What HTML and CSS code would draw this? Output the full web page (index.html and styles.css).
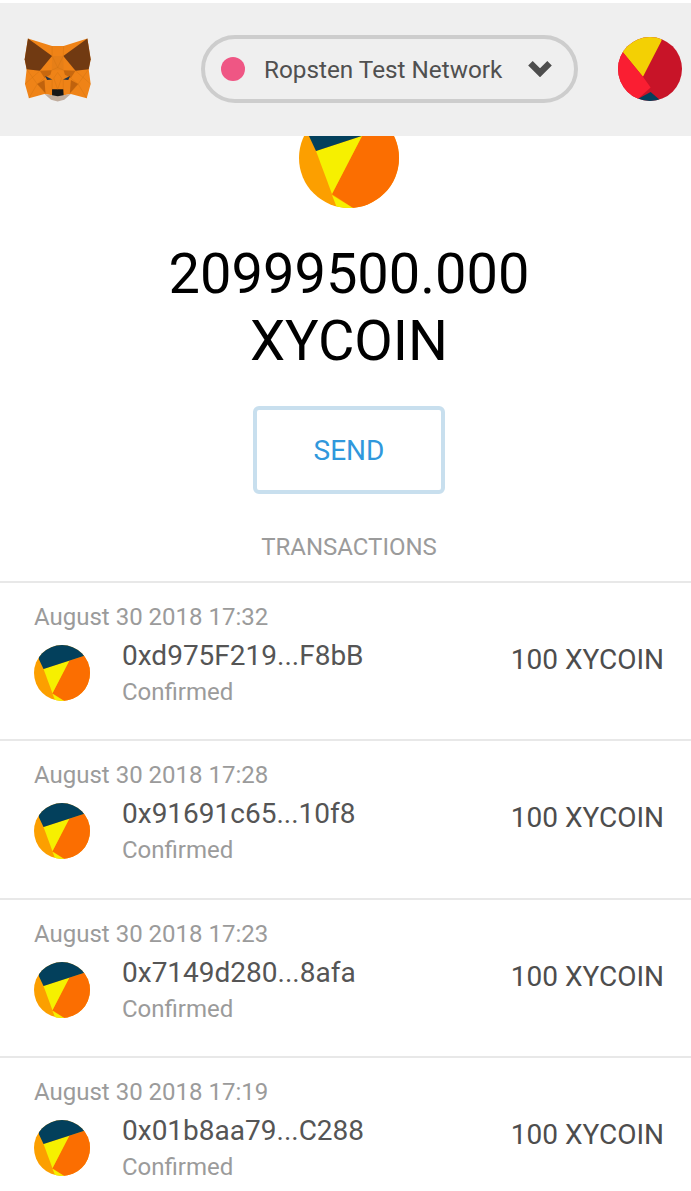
FILE: index.html
```html
<!DOCTYPE html>
<html lang="en">
<head>
  <meta charset="UTF-8">
  <meta name="viewport" content="width=device-width, initial-scale=1.0">
  <title>MetaMask</title>
  <link rel="stylesheet" href="styles.css">
</head>
<body>
  <svg class="defs" width="0" height="0">
    <defs>
      <clipPath id="disc"><circle cx="50" cy="50" r="50"/></clipPath>
      <symbol id="tokenIcon" viewBox="0 0 100 100">
        <g clip-path="url(#disc)">
          <rect width="100" height="100" fill="#fc9f00"/>
          <polygon points="63,28 88,20 100,0 100,100 54,100 33,86" fill="#fb6e01"/>
          <polygon points="17,43 63,28 33,86" fill="#f6f000"/>
          <polygon points="33,87 54,100 38,100" fill="#f6f000"/>
          <polygon points="5,0 9,26 17,43 90,19 90,0" fill="#03405c"/>
        </g>
      </symbol>
    </defs>
  </svg>

  <header class="topbar">
    <svg class="fox" viewBox="70 108 206 196">
      <polygon points="82,112 155,135 190,135 262,112 272,175 266,205 272,250 260,293 212,280 190,284 155,284 132,280 85,293 73,250 78,205 72,175" fill="#ef8317"/>
      <polygon points="82,112 155,165 118,210 78,205 72,175" fill="#713a12"/>
      <polygon points="262,112 189,165 226,210 266,205 272,175" fill="#713a12"/>
      <polygon points="155,165 189,165 190,208 154,208" fill="#e67f18"/>
      <polygon points="118,210 154,208 150,222 132,232" fill="#c8680e"/>
      <polygon points="226,210 190,208 194,222 212,232" fill="#c8680e"/>
      <polygon points="110,250 132,238 135,278" fill="#c0620d"/>
      <polygon points="234,250 212,238 209,278" fill="#c0620d"/>
      <polygon points="134,226 156,236 140,238" fill="#233447"/>
      <polygon points="210,226 188,236 204,238" fill="#233447"/>
      <polygon points="132,280 155,284 190,284 212,280 192,298 172,303 152,298" fill="#c0ad9e"/>
      <polygon points="155,266 189,266 190,284 172,287 155,284" fill="#161616"/>
      <g fill="none" stroke="#c9700f" stroke-width="1">
        <path d="M155,135 L155,165 M190,135 L189,165 M155,165 L172,200 L189,165 M154,208 L172,200 L190,208"/>
        <path d="M78,205 L110,250 L85,293 M73,250 L118,210 M110,250 L135,278 M132,232 L110,250"/>
        <path d="M266,205 L234,250 L260,293 M272,250 L226,210 M234,250 L209,278 M212,232 L234,250"/>
        <path d="M155,236 L155,266 M189,236 L189,266 M160,232 L172,215 L184,232 L172,266 Z"/>
      </g>
    </svg>
    <div class="network">
      <span class="networkDot"></span>
      <span class="networkName">Ropsten Test Network</span>
      <svg class="chevron" viewBox="0 0 24 16">
        <path d="M3 3 L12 12 L21 3" fill="none" stroke="#4d4d4d" stroke-width="6"/>
      </svg>
    </div>
    <svg class="account" viewBox="0 0 100 100">
      <g clip-path="url(#disc)">
        <rect width="100" height="100" fill="#c81428"/>
        <polygon points="0,0 0,23 7,23 39,62 68,6 68,0" fill="#f3d004"/>
        <polygon points="7,23 39,62 51,79 31,97 0,100 0,23" fill="#fa1e32"/>
        <polygon points="31,97 51,86 65,98 65,100 31,100" fill="#03405c"/>
      </g>
    </svg>
  </header>

  <main>
    <section class="summary">
      <svg class="bigIcon"><use href="#tokenIcon"/></svg>
      <div class="balance">20999500.000<br>XYCOIN</div>
      <button class="sendBtn">SEND</button>
      <div class="sectionLabel">TRANSACTIONS</div>
    </section>

    <ul class="txList">
      <li class="tx">
        <div class="txDate">August 30 2018 17:32</div>
        <div class="txBody">
          <svg class="txIcon"><use href="#tokenIcon"/></svg>
          <div class="txInfo">
            <div class="txAddress">0xd975F219...F8bB</div>
            <div class="txStatus">Confirmed</div>
          </div>
          <div class="txAmount">100 XYCOIN</div>
        </div>
      </li>
      <li class="tx">
        <div class="txDate">August 30 2018 17:28</div>
        <div class="txBody">
          <svg class="txIcon"><use href="#tokenIcon"/></svg>
          <div class="txInfo">
            <div class="txAddress">0x91691c65...10f8</div>
            <div class="txStatus">Confirmed</div>
          </div>
          <div class="txAmount">100 XYCOIN</div>
        </div>
      </li>
      <li class="tx">
        <div class="txDate">August 30 2018 17:23</div>
        <div class="txBody">
          <svg class="txIcon"><use href="#tokenIcon"/></svg>
          <div class="txInfo">
            <div class="txAddress">0x7149d280...8afa</div>
            <div class="txStatus">Confirmed</div>
          </div>
          <div class="txAmount">100 XYCOIN</div>
        </div>
      </li>
      <li class="tx">
        <div class="txDate">August 30 2018 17:19</div>
        <div class="txBody">
          <svg class="txIcon"><use href="#tokenIcon"/></svg>
          <div class="txInfo">
            <div class="txAddress">0x01b8aa79...C288</div>
            <div class="txStatus">Confirmed</div>
          </div>
          <div class="txAmount">100 XYCOIN</div>
        </div>
      </li>
    </ul>
  </main>
</body>
</html>
```

FILE: styles.css
```css
html, body {
  margin: 0;
  padding: 0;
  height: 100%;
  overflow: hidden;
  background-color: #fff;
  font-family: Roboto, sans-serif;
}
body {
  padding-top: 3px;
  box-sizing: border-box;
}
.defs {
  display: block;
  height: 0;
}
.topbar {
  position: relative;
  z-index: 1;
  display: flex;
  align-items: flex-start;
  height: 133px;
  box-sizing: border-box;
  padding: 32px 9px 0 24px;
  background-color: #efefef;
}
.fox {
  width: 68px;
  height: 65px;
  margin-top: 2px;
}
.network {
  display: flex;
  align-items: center;
  width: 377px;
  height: 68px;
  box-sizing: border-box;
  margin-left: 109px;
  padding-left: 16px;
  border: 4px solid #cdcdcd;
  border-radius: 34px;
}
.networkDot {
  width: 24px;
  height: 24px;
  border-radius: 50%;
  background-color: #ef5684;
}
.networkName {
  margin-left: 19px;
  font-size: 24.3px;
  color: #505050;
}
.chevron {
  width: 26px;
  height: 17px;
  margin-left: 25px;
  margin-top: -2px;
}
.account {
  width: 64px;
  height: 64px;
  margin-left: 40px;
  margin-top: 2px;
}
.summary {
  display: flex;
  flex-direction: column;
  align-items: center;
  margin-left: 7px;
}
.bigIcon {
  width: 100px;
  height: 100px;
  margin-top: -28px;
}
.balance {
  margin-top: 33px;
  font-size: 56px;
  line-height: 67px;
  text-align: center;
  color: #000;
}
.sendBtn {
  width: 192px;
  height: 88px;
  margin-top: 31px;
  background: #fff;
  border: 4px solid #c8dfee;
  border-radius: 6px;
  font-family: inherit;
  font-size: 28px;
  color: #3098dc;
}
.sectionLabel {
  margin-top: 38px;
  font-size: 24px;
  line-height: 30px;
  color: #9b9b9b;
}
.txList {
  list-style: none;
  margin: 19px 0 0;
  padding: 0;
}
.tx {
  height: 158.4px;
  box-sizing: border-box;
  padding: 20px 27px 0 34px;
  border-top: 2px solid #e8e8e8;
}
.txDate {
  margin-bottom: 7px;
  font-size: 24px;
  line-height: 28px;
  color: #9b9b9b;
}
.txBody {
  display: flex;
  align-items: flex-start;
}
.txIcon {
  width: 56px;
  height: 56px;
  margin-top: 7px;
}
.txInfo {
  flex: 1;
  margin-top: 1px;
  margin-left: 32px;
}
.txAddress {
  font-size: 28px;
  line-height: 34px;
  color: #555;
}
.txStatus {
  margin-top: 5px;
  font-size: 24px;
  line-height: 28px;
  color: #9b9b9b;
}
.txAmount {
  margin-top: 5px;
  font-size: 28px;
  line-height: 34px;
  color: #4d4d4d;
}
```
